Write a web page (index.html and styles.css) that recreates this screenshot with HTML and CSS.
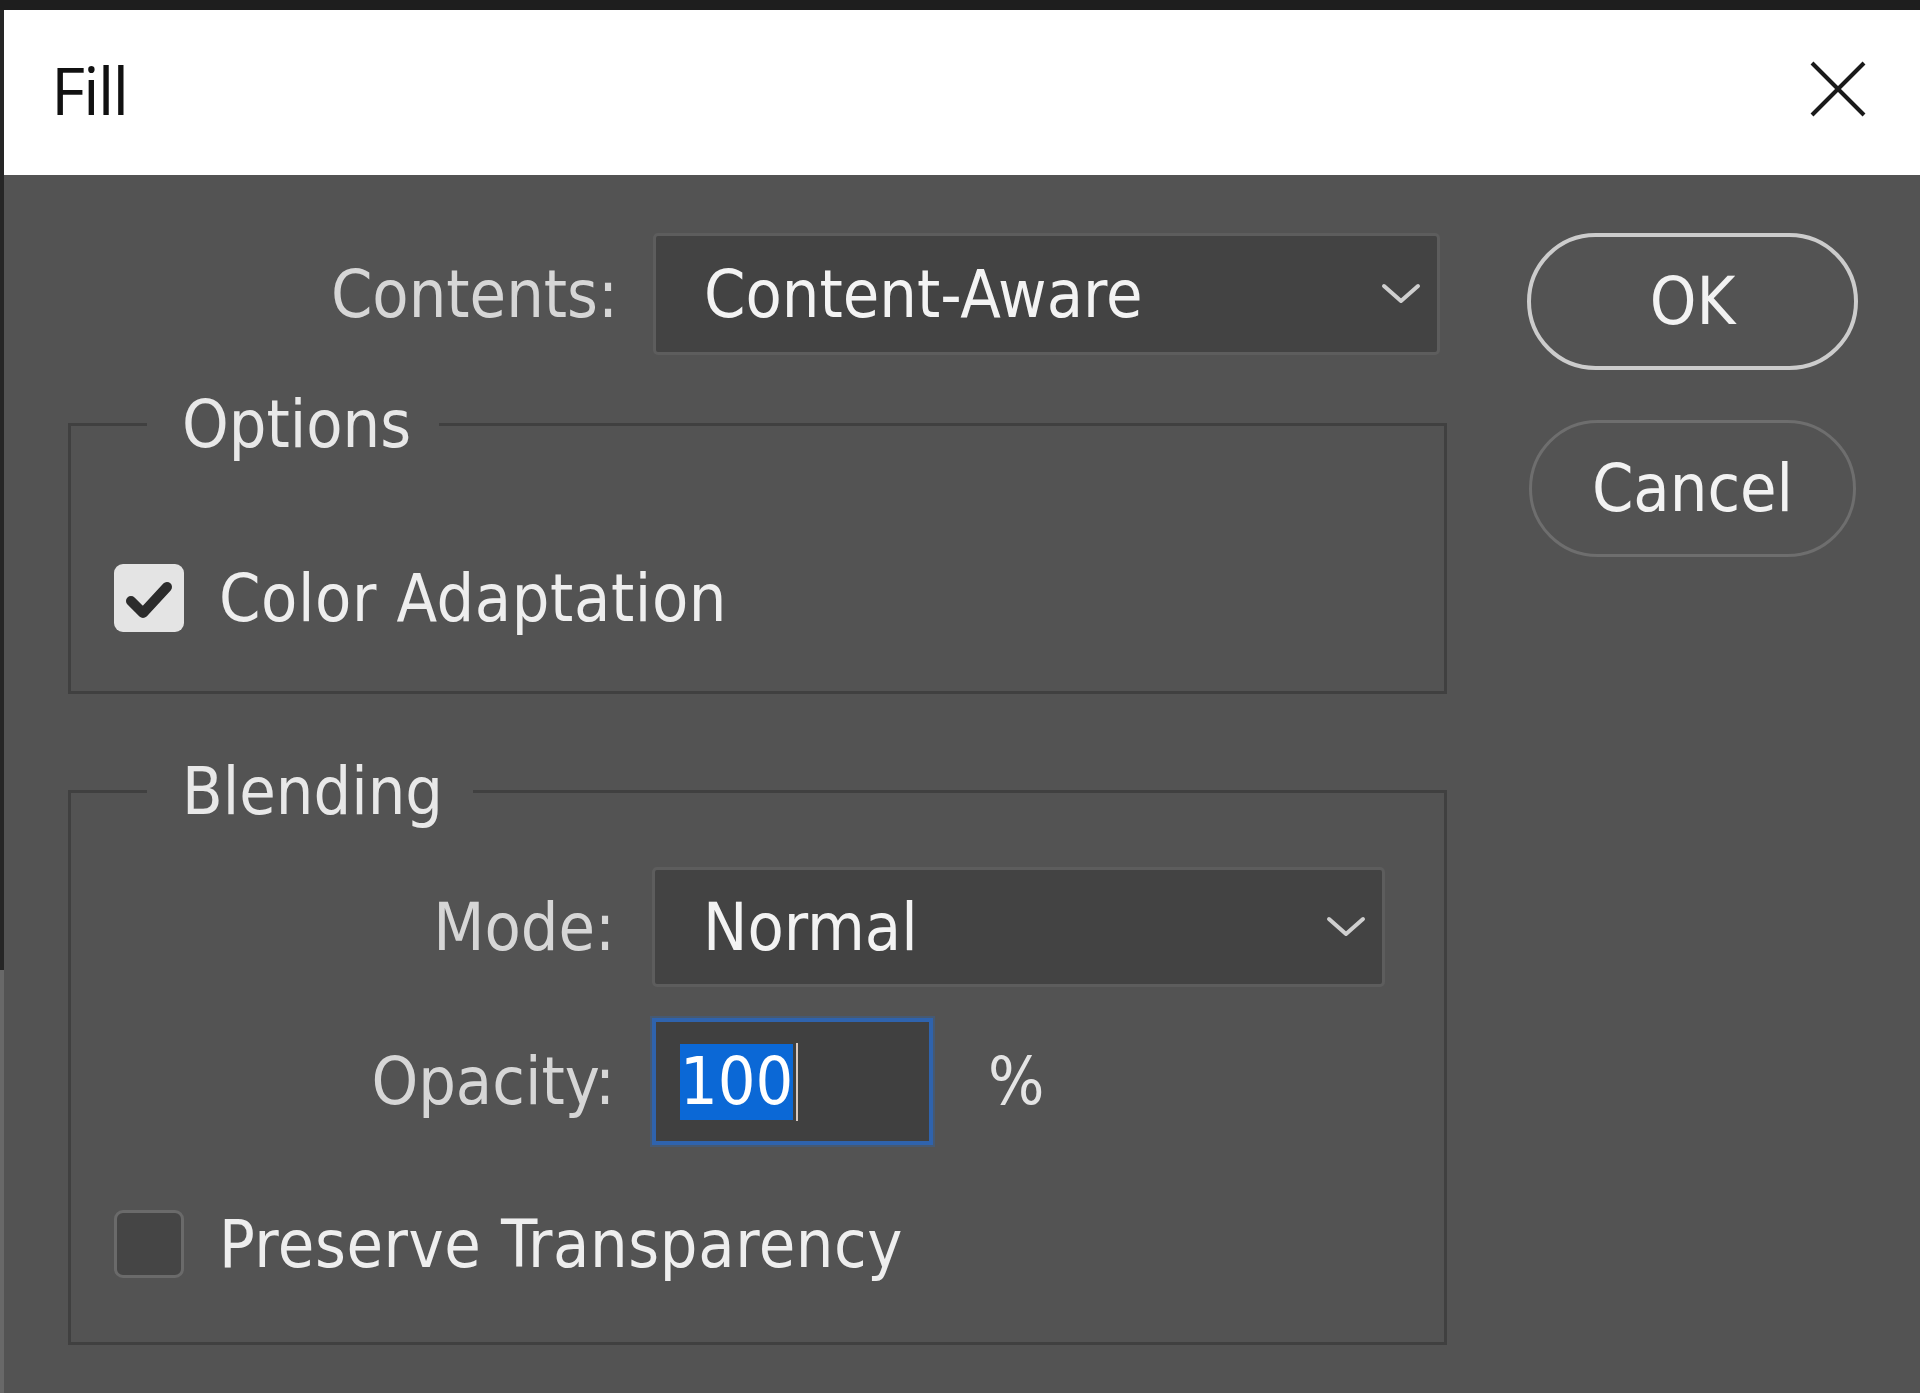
FILE: index.html
```html
<!DOCTYPE html>
<html lang="en">
<head>
<meta charset="utf-8">
<title>Fill</title>
<link rel="stylesheet" href="styles.css">
</head>
<body>
<div class="window">
  <header class="titlebar">
    <span class="title">Fill</span>
    <svg class="close" width="58" height="58" viewBox="0 0 58 58" aria-label="Close">
      <line x1="3" y1="3" x2="55" y2="55"/>
      <line x1="55" y1="3" x2="3" y2="55"/>
    </svg>
  </header>
  <div class="content">
    <div class="main">
      <div class="row contents-row">
        <span class="lbl lbl-contents">Contents:</span>
        <div class="select select-contents">
          <span class="value">Content-Aware</span>
          <svg class="chev" width="40" height="22" viewBox="0 0 40 22"><polyline points="3,3 20,18 37,3"/></svg>
        </div>
      </div>

      <div class="group group-options">
        <div class="legend legend-options">Options</div>
        <div class="check-row first">
          <span class="box checked">
            <svg width="70" height="68" viewBox="0 0 70 68"><polyline points="17,37 29,49 53,23"/></svg>
          </span>
          <span class="check-label">Color Adaptation</span>
        </div>
      </div>

      <div class="group group-blending">
        <div class="legend legend-blending">Blending</div>
        <div class="row mode-row">
          <span class="lbl lbl-sub">Mode:</span>
          <div class="select select-mode">
            <span class="value">Normal</span>
            <svg class="chev" width="40" height="22" viewBox="0 0 40 22"><polyline points="3,3 20,18 37,3"/></svg>
          </div>
        </div>
        <div class="row opacity-row">
          <span class="lbl lbl-sub">Opacity:</span>
          <div class="num-input"><span class="sel">100</span><span class="caret"></span></div>
          <span class="pct">%</span>
        </div>
        <div class="check-row preserve">
          <span class="box"></span>
          <span class="check-label">Preserve Transparency</span>
        </div>
      </div>
    </div>

    <div class="buttons">
      <button class="btn ok">OK</button>
      <button class="btn cancel">Cancel</button>
    </div>
  </div>
</div>
</body>
</html>
```

FILE: styles.css
```css
html, body {
  margin: 0;
  padding: 0;
}
body {
  width: 1920px;
  height: 1393px;
  overflow: hidden;
  background: #535353;
  font-family: "DejaVu Sans Condensed", "DejaVu Sans", sans-serif;
  font-stretch: condensed;
  font-size: 66px;
  color: #eeeeee;
}
.window {
  box-sizing: border-box;
  height: 1393px;
  border-top: 10px solid #1e1e1e;
  padding-left: 4px;
  background:
    linear-gradient(#262626 0, #262626 960px, #686868 960px) 0 0 / 4px 100% no-repeat,
    #535353;
}
.titlebar {
  height: 165px;
  background: #ffffff;
  display: flex;
  align-items: center;
  justify-content: space-between;
  padding: 0 53px 0 47px;
  box-sizing: border-box;
}
.title {
  font-family: "Open Sans", "Noto Sans", sans-serif;
  font-stretch: normal;
  font-size: 66px;
  color: #111111;
  letter-spacing: -2px;
  margin-top: -8px;
}
.close {
  margin-top: -8px;
}
.close line {
  stroke: #1a1a1a;
  stroke-width: 4;
}
.content {
  display: flex;
  padding: 58px 0 0 64px;
}
.main {
  width: 1379px;
}
.row {
  display: flex;
  align-items: center;
}
.lbl {
  text-align: right;
  color: #d6d6d6;
}
.lbl-contents {
  width: 550px;
  margin-right: 35px;
}
.lbl-sub {
  width: 501px;
  margin-right: 37px;
}
.select {
  box-sizing: border-box;
  display: flex;
  align-items: center;
  justify-content: space-between;
  background: #434343;
  border: 3px solid #5d5d5d;
  border-radius: 5px;
  color: #f3f3f3;
  padding: 0 16px 0 48px;
}
.select-contents {
  width: 787px;
  height: 122px;
}
.select-mode {
  width: 733px;
  height: 120px;
}
.chev polyline {
  fill: none;
  stroke: #cfcfcf;
  stroke-width: 4;
  stroke-linecap: round;
  stroke-linejoin: round;
}
.group {
  border: 3px solid #404040;
  padding: 0 0 58px 43px;
}
.group-options {
  margin-top: 68px;
}
.group-blending {
  margin-top: 96px;
  padding-bottom: 63px;
}
.legend {
  display: table;
  height: 70px;
  line-height: 70px;
  margin: -36px 0 0 33px;
  padding: 0 28px 0 35px;
  background: #535353;
  color: #e8e8e8;
}
.legend-blending {
  padding-right: 30px;
}
.check-row {
  display: flex;
  align-items: center;
  height: 70px;
}
.check-row.first {
  margin-top: 103px;
}
.check-row.preserve {
  margin-top: 64px;
}
.box {
  box-sizing: border-box;
  width: 70px;
  height: 68px;
  border-radius: 9px;
  background: #454545;
  border: 3px solid #6a6a6a;
  flex: none;
}
.box.checked {
  background: #e4e4e4;
  border: none;
}
.box.checked svg {
  display: block;
}
.box.checked polyline {
  fill: none;
  stroke: #2c2c2c;
  stroke-width: 10;
  stroke-linejoin: round;
  stroke-linecap: round;
}
.check-label {
  margin-left: 35px;
  color: #eeeeee;
  letter-spacing: 0.6px;
}
.mode-row {
  margin-top: 40px;
}
.opacity-row {
  margin-top: 31px;
}
.num-input {
  box-sizing: border-box;
  width: 281px;
  height: 127px;
  border: 4px solid #2f63ad;
  box-shadow: 0 0 0 2px rgba(47, 99, 173, 0.35);
  background: #404040;
  display: flex;
  align-items: center;
  padding-left: 24px;
}
.sel {
  background: #0b68d6;
  color: #ffffff;
  height: 76px;
  line-height: 76px;
}
.caret {
  width: 0;
  height: 78px;
  border-left: 2px solid #d9c9c0;
  margin-left: 3px;
}
.pct {
  margin-left: 55px;
  color: #e4e4e4;
}
.buttons {
  margin-left: 80px;
  display: flex;
  flex-direction: column;
  align-items: flex-start;
  gap: 50px;
}
.btn {
  box-sizing: border-box;
  width: 331px;
  height: 137px;
  border-radius: 69px;
  border: 4px solid #cccccc;
  background: transparent;
  color: #f2f2f2;
  font: inherit;
  font-size: 66px;
  padding: 0;
}
.btn.cancel {
  width: 327px;
  margin-left: 2px;
  border: 3px solid #6e6e6e;
}
```
